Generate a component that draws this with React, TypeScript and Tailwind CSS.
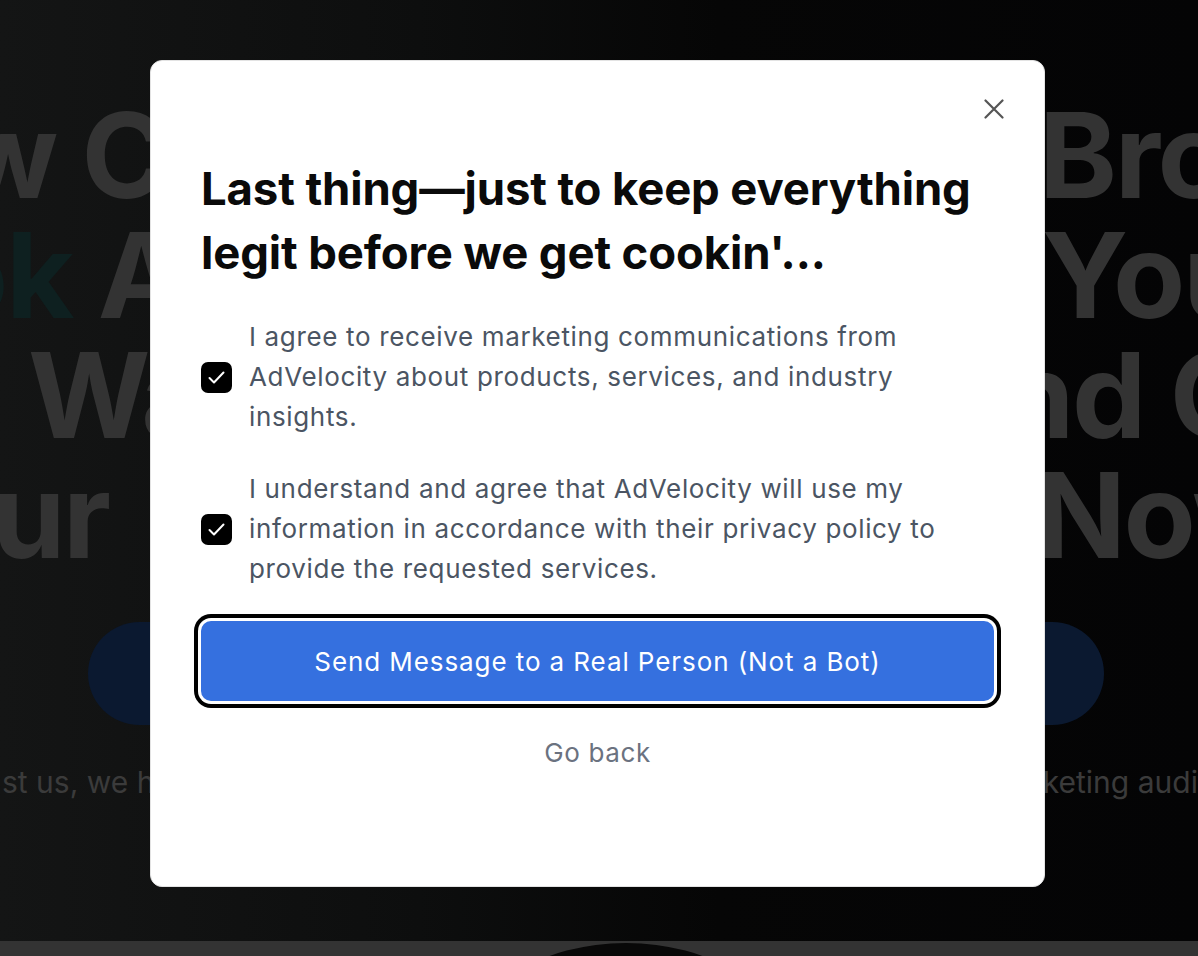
import type { ReactNode } from 'react';

function HeroLine({
  left,
  right,
  leftClass,
  rightClass,
}: {
  left: ReactNode;
  right: ReactNode;
  leftClass: string;
  rightClass: string;
}) {
  return (
    <div className="grid h-[120px] grid-cols-[1030px_1fr] whitespace-nowrap">
      <div className={leftClass}>{left}</div>
      <div className={rightClass}>{right}</div>
    </div>
  );
}

function CheckBox() {
  return (
    <div className="flex h-[31px] w-[31px] flex-shrink-0 items-center justify-center rounded-[7px] bg-black">
      <svg width="31" height="31" viewBox="0 0 31 31" fill="none">
        <path d="M8.5 16l4.5 4.5 9.5-10" stroke="white" strokeWidth="2" strokeLinecap="round" strokeLinejoin="round" />
      </svg>
    </div>
  );
}

export default function App() {
  return (
    <div className="relative h-[956px] w-full overflow-hidden bg-[#0a0a0a] font-['Inter','Liberation_Sans',sans-serif]">
      {/* hero behind the overlay */}
      <section className="h-[941px] bg-[linear-gradient(90deg,#141515_0%,#0d0e0e_35%,#060606_60%,#040405_100%)] pt-[95px]">
        <div className="text-[118px] font-bold leading-[120px] tracking-[-0.02em] text-[#333333]">
          <HeroLine leftClass="-ml-[42px]" left="w Cl" rightClass="ml-[9px]" right="Brok" />
          <HeroLine
            leftClass="-ml-[64px]"
            left={
              <>
                <span className="text-[#0e2020]">ok</span> Ad
              </>
            }
            rightClass="ml-[12px]"
            right="Your"
          />
          <HeroLine leftClass="ml-[28px]" left="Wa" rightClass="-ml-[29px]" right="nd Cl" />
          <HeroLine leftClass="-ml-[8px]" left="ur" rightClass="ml-[6px]" right="Now" />
        </div>
        <div className="mx-auto mt-[47px] h-[103px] w-[1016px] -translate-x-[3px] rounded-full bg-[#0b1930]" />
        <div className="mt-[37px] grid h-[40px] grid-cols-[1030px_1fr] whitespace-nowrap text-[30px] leading-[40px] text-[#3b3b3b]">
          <div className="ml-[2px]">st us, we have</div>
          <div className="ml-[1px]">rketing audit today</div>
        </div>
      </section>
      <div className="relative h-[15px] overflow-hidden bg-[#333333]">
        <div className="mx-auto mt-[2px] h-[200px] w-[310px] translate-x-[27px] rounded-[50%] bg-[#080808]" />
      </div>

      {/* modal */}
      <div className="absolute inset-0 flex justify-center pr-[3px] pt-[60px]">
        <div className="flex h-[827px] w-[895px] flex-col rounded-[12px] border border-[#e3e3e3] bg-white px-[50px] pt-[38px]">
          <div className="-mr-[10px] flex justify-end">
            <button className="flex h-[20px] w-[20px] items-center justify-center">
              <svg width="20" height="20" viewBox="0 0 20 20" fill="none">
                <path d="M1.5 1.5l17 17M18.5 1.5l-17 17" stroke="#555555" strokeWidth="2.2" strokeLinecap="round" />
              </svg>
            </button>
          </div>

          <h2 className="mt-[38px] text-[45.5px] font-bold leading-[64px] tracking-[-0.003em] text-[#0a0a0a]">
            Last thing—just to keep everything legit before we get cookin'...
          </h2>

          <label className="mt-8 flex items-center gap-[17px]">
            <CheckBox />
            <span className="text-[26px] leading-[40px] tracking-[0.025em] text-[#4b5563]">
              I agree to receive marketing communications from AdVelocity about products, services, and industry
              insights.
            </span>
          </label>

          <label className="mt-8 flex items-center gap-[17px]">
            <CheckBox />
            <span className="text-[26px] leading-[40px] tracking-[0.025em] text-[#4b5563]">
              I understand and agree that AdVelocity will use my information in accordance with their privacy policy
              to provide the requested services.
            </span>
          </label>

          <button className="mt-8 h-[80px] w-full rounded-[10px] bg-[#3570df] text-[26px] tracking-[0.035em] text-white ring-4 ring-black ring-offset-[3px] ring-offset-white">
            Send Message to a Real Person (Not a Bot)
          </button>

          <button className="mt-8 text-center text-[26px] leading-[40px] tracking-[0.025em] text-[#6b7280]">
            Go back
          </button>
        </div>
      </div>
    </div>
  );
}
